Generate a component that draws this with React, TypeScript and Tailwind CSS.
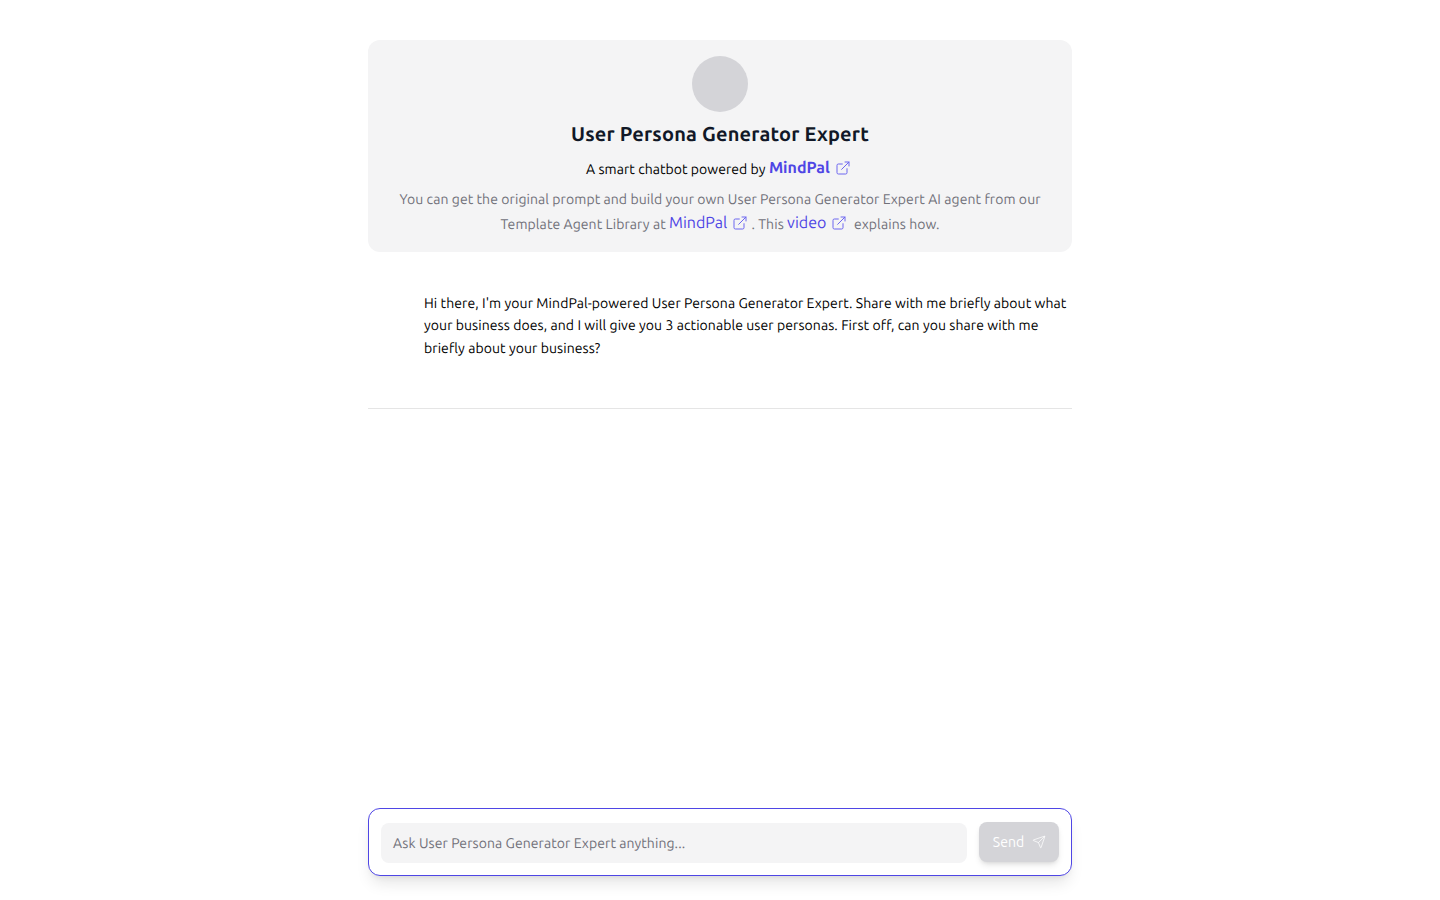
import { ExternalLink, Send } from "lucide-react";

const font = { fontFamily: "Ubuntu, 'Noto Sans', sans-serif" };

function OutLink({ label, bold, size }: { label: string; bold?: boolean; size: number }) {
  return (
    <a className={`inline-flex items-center gap-[5px] -translate-y-px tracking-normal text-[#4f46e5] ${bold ? "font-semibold text-base" : "text-base"}`}>
      {label}
      <ExternalLink size={size} strokeWidth={1.5} className="text-[#6d66f0]" />
    </a>
  );
}

export default function App() {
  return (
    <div style={font} className="h-[900px] overflow-hidden bg-white flex justify-center [text-rendering:geometricPrecision]">
      <div className="w-[704px] h-full flex flex-col pt-10 pb-6">
        <div className="bg-[#f4f4f5] rounded-xl pt-4 flex flex-col items-center text-center h-[212px]">
          <div className="w-14 h-14 shrink-0 rounded-full bg-[#d4d4d8]" />
          <h1 className="mt-2 text-xl leading-7 font-semibold tracking-[0.17px] text-[#111827]">User Persona Generator Expert</h1>
          <p className="mt-[9px] pr-[3px] text-sm leading-6 tracking-[0.05px] text-black">
            A smart chatbot powered by <OutLink label="MindPal" bold size={16} />
          </p>
          <p className="mt-1.5 text-sm leading-[25px] tracking-[0.075px] text-[#71717a] w-[660px]">
            You can get the original prompt and build your own User Persona Generator Expert AI agent from our Template Agent Library at{" "}
            <OutLink label="MindPal" size={16} /> . This <OutLink label="video" size={16} /> &nbsp;explains how.
          </p>
        </div>

        <div className="pt-10 pb-[48.8px] pl-14 border-b border-[#e5e5e5] text-sm leading-[22.4px] tracking-[0.075px] text-black">
          Hi there, I'm your MindPal-powered User Persona Generator Expert. Share with me briefly about what your business does, and I will give you 3 actionable user personas. First off, can you share with me briefly about your business?
        </div>

        <div className="mt-auto h-[68px] rounded-xl border border-[#4f46e5] bg-white shadow-lg flex items-center gap-3 px-3">
          <div className="flex-1 h-10 mt-px rounded-lg bg-[#f4f4f5] px-3 flex items-center text-sm tracking-[0.075px] text-[#71717a]">
            Ask User Persona Generator Expert anything...
          </div>
          <button className="w-20 h-10 rounded-lg bg-[#d4d4d8] text-white text-sm tracking-[0.075px] shadow-md flex items-center justify-center gap-2 pl-px">
            Send
            <Send size={14} strokeWidth={1.25} />
          </button>
        </div>
      </div>
    </div>
  );
}
